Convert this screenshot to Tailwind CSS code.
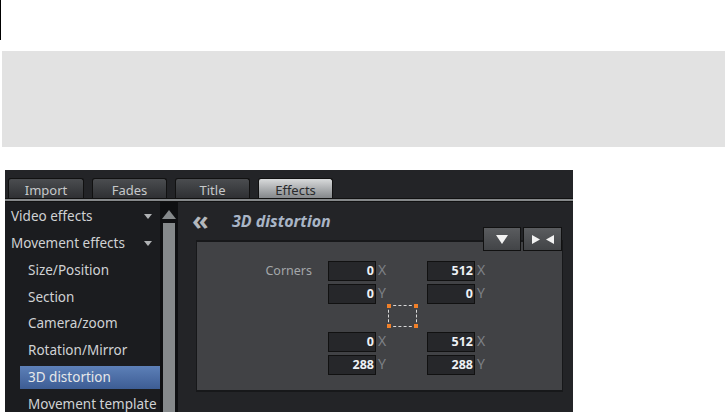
<!DOCTYPE html>
<html>
<head>
<meta charset="utf-8">
<script src="https://cdn.jsdelivr.net/npm/@tailwindcss/browser@4"></script>
</head>
<body class="bg-white w-[726px] h-[412px] overflow-hidden font-['Noto_Sans',sans-serif]">
  <div class="w-[1px] h-[40px] bg-black"></div>
  <div class="ml-[2px] mt-[11px] w-[723px] h-[96px] bg-[#e2e2e2]"></div>
  <div class="ml-[5px] mt-[23px] w-[568px] h-[242px] bg-[#232427] flex flex-col overflow-hidden">
    <div class="h-[28px] flex items-end gap-[8px] pl-[3px] shrink-0">
      <div class="w-[76px] h-[20px] rounded-t-[3px] border border-b-0 border-[#111] bg-gradient-to-b from-[#4b4d50] to-[#2f3033] text-[#c6c8ca] text-[13px] leading-[22px] text-center">Import</div>
      <div class="w-[75px] h-[20px] rounded-t-[3px] border border-b-0 border-[#111] bg-gradient-to-b from-[#4b4d50] to-[#2f3033] text-[#c6c8ca] text-[13px] leading-[22px] text-center">Fades</div>
      <div class="w-[75px] h-[20px] rounded-t-[3px] border border-b-0 border-[#111] bg-gradient-to-b from-[#4b4d50] to-[#2f3033] text-[#c6c8ca] text-[13px] leading-[22px] text-center">Title</div>
      <div class="w-[75px] h-[20px] rounded-t-[3px] border border-b-0 border-[#111] bg-gradient-to-b from-[#d8dadb] to-[#85888b] text-[#2a2b2d] text-[13px] leading-[22px] text-center">Effects</div>
    </div>
    <div class="h-[4px] bg-[#85888a] border-b border-t border-[#111] shrink-0"></div>
    <div class="flex flex-1 min-h-0">
      <div class="w-[155px] bg-[#1b1c1f] pt-[1px] shrink-0 text-[#d0d2d4] text-[13.5px]">
        <div class="h-[26.8px] pl-[6px] pr-[8px] flex items-center justify-between">Video effects <svg width="8" height="5" viewBox="0 0 8 5"><path d="M0 0H8L4 5Z" fill="#b0b2b4"/></svg></div>
        <div class="h-[26.8px] pl-[6px] pr-[8px] flex items-center justify-between">Movement effects <svg width="8" height="5" viewBox="0 0 8 5"><path d="M0 0H8L4 5Z" fill="#b0b2b4"/></svg></div>
        <div class="h-[26.8px] pl-[23px] flex items-center">Size/Position</div>
        <div class="h-[26.8px] pl-[23px] flex items-center">Section</div>
        <div class="h-[26.8px] pl-[23px] flex items-center">Camera/zoom</div>
        <div class="h-[26.8px] pl-[23px] flex items-center">Rotation/Mirror</div>
        <div class="h-[23px] my-[2px] ml-[15px] pl-[8px] flex items-center bg-gradient-to-b from-[#5d80b8] to-[#3d5d94] text-[#e6e8ea]">3D distortion</div>
        <div class="h-[26.8px] pl-[23px] flex items-center whitespace-nowrap">Movement template</div>
      </div>
      <div class="w-[18px] bg-[#0f1012] shrink-0 flex flex-col items-center pt-[8px]">
        <svg width="14" height="9" viewBox="0 0 14 9" class="shrink-0"><path d="M0 9L7 0L14 9Z" fill="#85898b"/></svg>
        <div class="w-[12px] flex-1 mt-[4px] bg-[#85898b]"></div>
      </div>
      <div class="flex-1 relative pt-[8px] pl-[18px] min-w-0">
        <div class="h-[30px] flex items-start">
          <span class="text-[#b4b8bd] text-[27px] leading-[20px] font-bold w-[35px] -ml-[4px]">«</span>
          <span class="text-[#a9b5c6] text-[16px] leading-[22px] font-bold italic ml-[5px]">3D distortion</span>
        </div>
        <div class="absolute right-[11px] top-[25px] flex gap-[2px] z-10">
          <div class="w-[38px] h-[24px] border border-[#111] bg-gradient-to-b from-[#5a5c5f] to-[#424447] flex items-center justify-center">
            <svg width="12" height="9" viewBox="0 0 12 9"><path d="M0 0H12L6 9Z" fill="#f2f2f2"/></svg>
          </div>
          <div class="w-[39px] h-[24px] border border-[#111] bg-gradient-to-b from-[#5a5c5f] to-[#424447] flex items-center justify-center">
            <svg width="22" height="9" viewBox="0 0 22 9"><path d="M0 0L8 4.5L0 9Z M22 0L14 4.5L22 9Z" fill="#f2f2f2"/></svg>
          </div>
        </div>
        <div class="w-[367px] h-[152px] bg-[#414245] border-t-2 border-l border-b-2 border-r border-[#17181a] pl-[70px] pt-[19px] text-[13px]">
          <div class="grid grid-cols-[61px_99px_99px] auto-rows-auto">
            <div class="text-[#a4a7aa] text-[12.5px] text-right pr-[16px] leading-[20px] whitespace-nowrap justify-self-end">Corners</div>
            <div class="flex gap-[2px] h-[23px] items-start"><div class="w-[48px] h-[20px] bg-[#26272a] border border-[#111] text-right pr-[1px] text-[#eef1f5] font-bold text-[12.5px] leading-[17px]">0</div><span class="text-[#7d8085] text-[14px] leading-[17px]">X</span></div>
            <div class="flex gap-[2px] h-[23px] items-start"><div class="w-[48px] h-[20px] bg-[#26272a] border border-[#111] text-right pr-[1px] text-[#eef1f5] font-bold text-[12.5px] leading-[17px]">512</div><span class="text-[#7d8085] text-[14px] leading-[17px]">X</span></div>
            <div></div>
            <div class="flex gap-[2px] h-[20px] items-start"><div class="w-[48px] h-[20px] bg-[#26272a] border border-[#111] text-right pr-[1px] text-[#eef1f5] font-bold text-[12.5px] leading-[17px]">0</div><span class="text-[#7d8085] text-[14px] leading-[17px]">Y</span></div>
            <div class="flex gap-[2px] h-[20px] items-start"><div class="w-[48px] h-[20px] bg-[#26272a] border border-[#111] text-right pr-[1px] text-[#eef1f5] font-bold text-[12.5px] leading-[17px]">0</div><span class="text-[#7d8085] text-[14px] leading-[17px]">Y</span></div>
            <div class="col-span-3 h-[28px] pl-[121px] pt-[1px] flex items-start">
              <div class="relative w-[29px] h-[22px] border border-dashed border-[#d8d8d8]">
                <span class="absolute -left-[2px] -top-[2px] w-[4px] h-[4px] bg-[#f0802a]"></span>
                <span class="absolute -right-[2px] -top-[2px] w-[4px] h-[4px] bg-[#f0802a]"></span>
                <span class="absolute -left-[2px] -bottom-[2px] w-[4px] h-[4px] bg-[#f0802a]"></span>
                <span class="absolute -right-[2px] -bottom-[2px] w-[4px] h-[4px] bg-[#f0802a]"></span>
              </div>
            </div>
            <div></div>
            <div class="flex gap-[2px] h-[23px] items-start"><div class="w-[48px] h-[20px] bg-[#26272a] border border-[#111] text-right pr-[1px] text-[#eef1f5] font-bold text-[12.5px] leading-[17px]">0</div><span class="text-[#7d8085] text-[14px] leading-[17px]">X</span></div>
            <div class="flex gap-[2px] h-[23px] items-start"><div class="w-[48px] h-[20px] bg-[#26272a] border border-[#111] text-right pr-[1px] text-[#eef1f5] font-bold text-[12.5px] leading-[17px]">512</div><span class="text-[#7d8085] text-[14px] leading-[17px]">X</span></div>
            <div></div>
            <div class="flex gap-[2px] h-[20px] items-start"><div class="w-[48px] h-[20px] bg-[#26272a] border border-[#111] text-right pr-[1px] text-[#eef1f5] font-bold text-[12.5px] leading-[17px]">288</div><span class="text-[#7d8085] text-[14px] leading-[17px]">Y</span></div>
            <div class="flex gap-[2px] h-[20px] items-start"><div class="w-[48px] h-[20px] bg-[#26272a] border border-[#111] text-right pr-[1px] text-[#eef1f5] font-bold text-[12.5px] leading-[17px]">288</div><span class="text-[#7d8085] text-[14px] leading-[17px]">Y</span></div>
          </div>
        </div>
      </div>
    </div>
  </div>
</body>
</html>
